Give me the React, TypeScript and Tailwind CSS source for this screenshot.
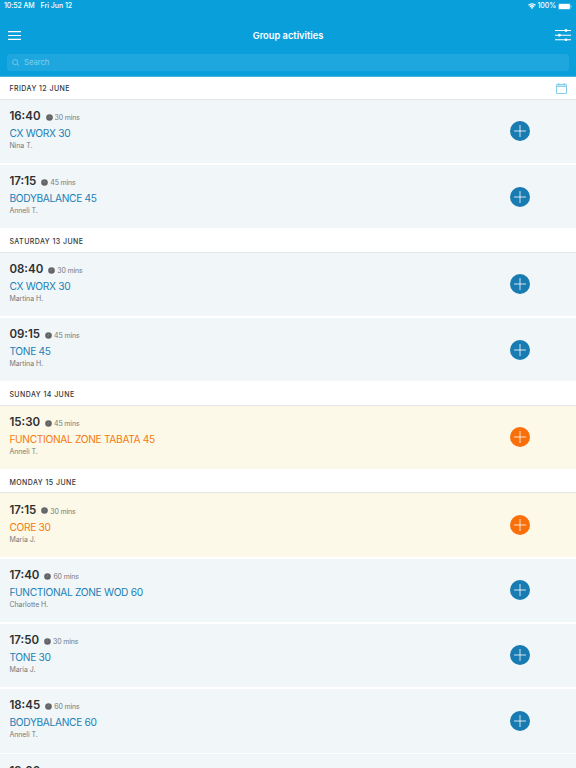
import React from 'react';

interface Activity {
  time: string;
  mins?: number;
  name?: string;
  trainer?: string;
  full?: boolean;
}

interface Day {
  label: string;
  activities: Activity[];
}

const days: Day[] = [
  {
    label: 'FRIDAY 12 JUNE',
    activities: [
      { time: '16:40', mins: 30, name: 'CX WORX 30', trainer: 'Nina T.' },
      { time: '17:15', mins: 45, name: 'BODYBALANCE 45', trainer: 'Anneli T.' },
    ],
  },
  {
    label: 'SATURDAY 13 JUNE',
    activities: [
      { time: '08:40', mins: 30, name: 'CX WORX 30', trainer: 'Martina H.' },
      { time: '09:15', mins: 45, name: 'TONE 45', trainer: 'Martina H.' },
    ],
  },
  {
    label: 'SUNDAY 14 JUNE',
    activities: [
      { time: '15:30', mins: 45, name: 'FUNCTIONAL ZONE TABATA 45', trainer: 'Anneli T.', full: true },
    ],
  },
  {
    label: 'MONDAY 15 JUNE',
    activities: [
      { time: '17:15', mins: 30, name: 'CORE 30', trainer: 'Maria J.', full: true },
      { time: '17:40', mins: 60, name: 'FUNCTIONAL ZONE WOD 60', trainer: 'Charlotte H.' },
      { time: '17:50', mins: 30, name: 'TONE 30', trainer: 'Maria J.' },
      { time: '18:45', mins: 60, name: 'BODYBALANCE 60', trainer: 'Anneli T.' },
      { time: '19:00' },
    ],
  },
];

const StatusBar = () => (
  <div className="flex h-3 items-center justify-between pl-1 pr-[4px] text-[7px] font-medium">
    <div className="flex gap-[6px]">
      <span className="tracking-[-0.1px]">10:52 AM</span>
      <span className="tracking-[-0.05px]">Fri Jun 12</span>
    </div>
    <div className="flex items-center gap-[2px]">
      <svg className="h-[6px] w-[8px]" viewBox="0 0 16 12" fill="none" stroke="white" strokeWidth="2.5">
        <path d="M1 4.5a10 10 0 0 1 14 0M3.8 7.6a6 6 0 0 1 8.4 0" />
        <path d="M8 12 5.4 9.4a3.6 3.6 0 0 1 5.2 0z" fill="white" stroke="none" />
      </svg>
      <span className="tracking-[-0.1px]">100%</span>
      <svg className="h-[7px] w-[14px]" viewBox="0 0 14 7">
        <rect x=".25" y=".25" width="12.2" height="6.5" rx="1.6" fill="none" stroke="white" strokeOpacity=".5" strokeWidth=".5" />
        <rect x=".8" y=".9" width="11.1" height="5.2" rx="1.1" fill="white" />
        <rect x="12.9" y="2.5" width=".8" height="2" rx=".4" fill="white" fillOpacity=".6" />
      </svg>
    </div>
  </div>
);

const Header = () => (
  <header className="h-[77px] shrink-0 border-b border-[#48b4df] bg-[#099fdb] text-white">
    <StatusBar />
    <div className="flex h-[42px] items-center justify-between pl-[7.5px] pr-[5px] pt-[4px]">
      <button aria-label="Menu" className="w-[13.5px]">
        <svg className="h-[9px] w-[13.5px]" viewBox="0 0 13.5 9" stroke="white" strokeWidth="1.2">
          <path d="M0 .6h13.5M0 4.5h13.5M0 8.4h13.5" />
        </svg>
      </button>
      <h1 className="pt-px text-[9.3px] font-semibold">Group activities</h1>
      <button aria-label="Filters">
        <svg className="h-[12px] w-[16px]" viewBox="0 0 16 12" stroke="white" strokeWidth="1.1" fill="white">
          <path d="M0 1.5h16M0 6.2h16M0 10.8h16" />
          <circle cx="11" cy="1.5" r="1.4" stroke="none" />
          <circle cx="4.4" cy="6.2" r="1.4" stroke="none" />
          <circle cx="11" cy="10.8" r="1.4" stroke="none" />
        </svg>
      </button>
    </div>
    <div className="mx-[7px] flex h-[17px] items-center gap-[4.5px] rounded-[3px] bg-[#1da7de] pl-[5px] text-[#83cfed]">
      <svg className="h-[7.5px] w-[7.5px]" viewBox="0 0 14 14" fill="none" stroke="currentColor" strokeWidth="1.4">
        <circle cx="5.8" cy="5.8" r="4.8" />
        <path d="m9.4 9.4 4 4" />
      </svg>
      <span className="pt-px text-[7.8px] tracking-[-0.1px]">Search</span>
    </div>
  </header>
);

const CalendarIcon = () => (
  <svg className="h-[11px] w-[11px]" viewBox="0 0 11 11" fill="none" stroke="#5fbfe6" strokeWidth=".8">
    <rect x=".5" y="1.4" width="10" height="9.1" rx=".6" />
    <path d="M.5 3.4h10M2.8 0v2.4M8.2 0v2.4" />
    <path d="M.5 2.4h10" stroke="#b9e3f4" />
  </svg>
);

const ActivityRow: React.FC<{ activity: Activity }> = ({ activity }) => {
  const { time, mins, name, trainer, full } = activity;
  return (
    <li
      className={`mb-[1.6px] flex h-[63.6px] items-start justify-between pl-[9.4px] pr-[46px] last:mb-0 ${
        full ? 'bg-[#fcf9e9]' : 'bg-[#f1f6f9]'
      }`}
    >
      <div className="pt-[9px]">
        <div className="flex h-[16px] items-center">
          <span className="text-[11.5px] font-semibold text-[#2d2f31]">{time}</span>
          {mins && (
            <>
              <svg className="ml-[5px] mt-px h-[7px] w-[7px]" viewBox="0 0 14 14">
                <circle cx="7" cy="7" r="6.6" fill="#636567" />
                <path d="M7 3v4.2H4.4" fill="none" stroke="#8b8d8f" strokeWidth="1" />
              </svg>
              <span className="ml-[2px] mt-[3px] text-[7px] tracking-[-0.15px] text-[#77797b]">{mins} mins</span>
            </>
          )}
        </div>
        {name && (
          <div
            className={`h-[16px] pt-[0.5px] text-[10.2px] leading-[16px] tracking-[-0.32px] ${
              full ? 'text-[#f5790e]' : 'text-[#1c7fb5]'
            }`}
          >
            {name}
          </div>
        )}
        {trainer && <div className="mt-[0.5px] text-[7px] leading-[9px] tracking-[-0.05px] text-[#77797b]">{trainer}</div>}
      </div>
      {name && (
        <button
          aria-label="Book"
          className={`mt-[21.7px] flex h-5 w-5 items-center justify-center rounded-full ${
            full ? 'bg-[#f9700b]' : 'bg-[#187bb1]'
          }`}
        >
          <svg className="h-3 w-3" viewBox="0 0 12 12" stroke="white" strokeWidth=".8">
            <path d="M6 0v12M0 6h12" />
          </svg>
        </button>
      )}
    </li>
  );
};

export default function App() {
  return (
    <div className="flex h-screen w-full flex-col overflow-hidden bg-white font-['Inter',sans-serif]">
      <Header />
      <main>
        {days.map((day, i) => (
          <section key={day.label}>
            <div
              className={`flex items-center justify-between border-b border-[#e2e6e8] pl-[9.4px] pr-[9.5px] ${
                i === 0 ? 'h-[22.7px] pt-[2px]' : 'h-[24.2px] pt-[4px]'
              }`}
            >
              <h2 className="text-[7px] font-medium tracking-[0.44px] text-[#333537]">{day.label}</h2>
              {i === 0 && <CalendarIcon />}
            </div>
            <ul>
              {day.activities.map((activity) => (
                <ActivityRow key={activity.time} activity={activity} />
              ))}
            </ul>
          </section>
        ))}
      </main>
    </div>
  );
}
